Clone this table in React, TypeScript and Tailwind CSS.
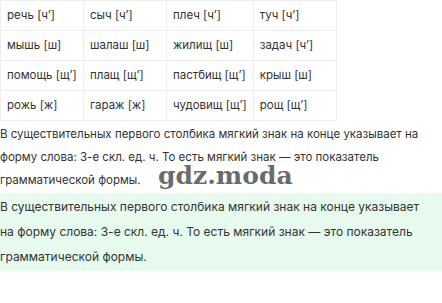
import React from 'react';

const rows: string[][] = [
  ['речь [ч\u2019]', 'сыч [ч\u2019]', 'плеч [ч\u2019]', 'туч [ч\u2019]'],
  ['мышь [ш]', 'шалаш [ш]', 'жилищ [ш]', 'задач [ч\u2019]'],
  ['помощь [щ\u2019]', 'плащ [щ\u2019]', 'пастбищ [щ\u2019]', 'крыш [ш]'],
  ['рожь [ж]', 'гараж [ж]', 'чудовищ [щ\u2019]', 'рощ [щ\u2019]'],
];

const text =
  'В существительных первого столбика мягкий знак на конце указывает на форму слова: 3-е скл. ед. ч. То есть мягкий знак — это показатель грамматической формы.';

const App: React.FC = () => {
  return (
    <div className="w-[442px] h-[303px] bg-white text-[#333] overflow-hidden relative font-['Inter',sans-serif]">
      {/* Table */}
      <table className="border-collapse text-[11.5px]">
        <tbody>
          {rows.map((row, i) => (
            <tr key={i} className="h-[30px]">
              {row.map((cell, j) => (
                <td key={j} className="w-[83px] px-[6px] border border-[#eeeeee] whitespace-nowrap align-middle">
                  {cell}
                </td>
              ))}
            </tr>
          ))}
        </tbody>
      </table>

      {/* Answer text */}
      <p className="text-[11.5px] leading-[23px] pt-[2px] pr-[6px]">{text}</p>

      {/* Watermark */}
      <div className="absolute left-[158px] top-[163px] text-[25px] font-bold text-[#6b6b6b] font-['DejaVu_Serif',serif] leading-none">
        gdz.moda
      </div>

      {/* Highlighted copy */}
      <div className="mt-[1px] bg-[#e6fbee] pt-[1px] pb-[2px]">
        <p className="text-[12px] leading-[25px] pr-[8px]">{text}</p>
      </div>
    </div>
  );
};

export default App;
